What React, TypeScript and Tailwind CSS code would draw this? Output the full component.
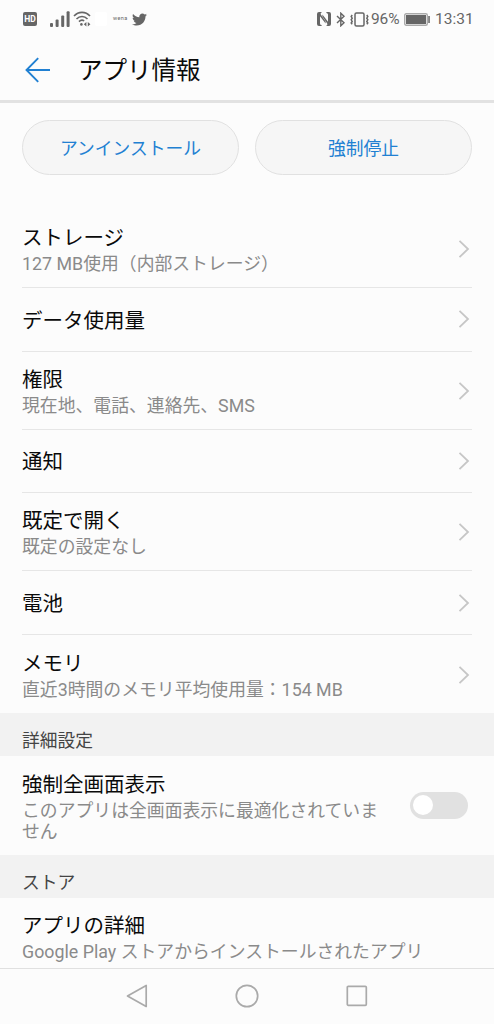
import React from 'react';
import { FaTwitter } from 'react-icons/fa';

interface SettingItem {
  title: string;
  detail?: string;
}

const items: SettingItem[] = [
  { title: 'ストレージ', detail: '127 MB使用（内部ストレージ）' },
  { title: 'データ使用量' },
  { title: '権限', detail: '現在地、電話、連絡先、SMS' },
  { title: '通知' },
  { title: '既定で開く', detail: '既定の設定なし' },
  { title: '電池' },
  { title: 'メモリ', detail: '直近3時間のメモリ平均使用量：154 MB' },
];

const StatusBar: React.FC = () => (
  <div className="flex h-[38px] shrink-0 items-center justify-between pl-[23px] pr-[21px] text-[#666]">
    <div className="flex items-center">
      <span className="flex h-[14px] w-[14px] items-center justify-center rounded-[2px] bg-[#666] text-[8.5px] font-bold leading-none text-white">HD</span>
      <svg className="ml-[13px]" width="20" height="16" viewBox="0 0 20 16" fill="currentColor">
        <rect x="0" y="12" width="3" height="4" rx="1" />
        <rect x="5.6" y="8.5" width="3" height="7.5" rx="1" />
        <rect x="11.2" y="4.5" width="3" height="11.5" rx="1" />
        <rect x="16.6" y="0.3" width="3" height="15.7" rx="1" />
      </svg>
      <svg className="ml-[3px]" width="18" height="16" viewBox="0 0 18 16" fill="none" stroke="currentColor" strokeWidth="1.6">
        <path d="M1 5C5.4 .2 12.6 .2 17 5M3.5 8C6.7 4.7 11.3 4.7 14.5 8M6 10.6C7.5 9 9.8 8.9 11.2 9.8" />
        <circle cx="8.4" cy="13.4" r="1.3" fill="currentColor" stroke="none" />
        <path d="M13.4 11v4.4l-2.6-2.2zM14.8 11v4.4l2.6-2.2z" fill="currentColor" stroke="none" />
      </svg>
      <span className="ml-1 h-[14px] w-3 rounded-[2px] bg-white" />
      <span className="ml-[6px] w-[16px] text-[5.5px] leading-none tracking-[0.4px]">wena</span>
      <FaTwitter className="ml-[3px]" size={15} />
    </div>
    <div className="flex items-center">
      <svg width="14" height="14" viewBox="0 0 14 14" fill="currentColor">
        <path d="M5 0H2Q0 0 0 2v10q0 2 2 2h2.6V13Q3 13 3 11.5V4.2l5.6 7.3V9.4L3.8 2.6Q3 1 5 0z" />
        <path d="M9 14h3q2 0 2-2V2q0-2-2-2H9.4V1Q11 1 11 2.5v7.3L5.4 2.5v2.1l4.8 6.8Q11 13 9 14z" />
      </svg>
      <svg className="ml-[5px]" width="10" height="15" viewBox="0 0 10 15" fill="none" stroke="currentColor" strokeWidth="1.4">
        <path d="M1 4l7 6.8-3.2 3V1.2L8 4.2 1 11" />
      </svg>
      <svg className="ml-1" width="19" height="15" viewBox="0 0 19 15" fill="none" stroke="currentColor" strokeWidth="1.5">
        <rect x="5" y="1" width="9" height="13" rx="1.5" />
        <path d="M2.2 3l-1 1.6 1 1.6-1 1.6 1 1.6-1 1.6 1 1.2M16.8 3l1 1.6-1 1.6 1 1.6-1 1.6 1 1.6-1 1.2" />
      </svg>
      <span className="ml-[2px] w-[29px] pt-[2px] text-[15.5px] leading-none tracking-[-0.1px]">96%</span>
      <svg className="ml-1" width="26" height="13" viewBox="0 0 26 13">
        <rect x=".7" y=".7" width="22.6" height="11.6" rx="1.5" fill="none" stroke="#aaa" strokeWidth="1.4" />
        <rect x="2" y="2" width="20" height="9" fill="currentColor" />
        <rect x="24.3" y="3" width="1.5" height="7" fill="currentColor" />
      </svg>
      <span className="ml-[5px] w-[38px] pt-[2px] text-[15.5px] leading-none">13:31</span>
    </div>
  </div>
);

const Chevron: React.FC = () => (
  <svg className="mr-[2px] shrink-0" width="12" height="18" viewBox="0 0 12 18" fill="none" stroke="#c6c6c6" strokeWidth="1.8">
    <path d="M1.5 .8L10 9l-8.5 8.2" />
  </svg>
);

const Label: React.FC<SettingItem> = ({ title, detail }) => (
  <div className={`flex flex-col ${detail ? '' : 'pt-[3px]'}`}>
    <span className="text-[20.5px] leading-[28px] text-[#0a0a0a]">{title}</span>
    {detail && <span className="pt-px text-[17.83px] leading-[21px] text-[#8a8a8a]">{detail}</span>}
  </div>
);

const SectionHeader: React.FC<{ text: string }> = ({ text }) => (
  <div className="flex h-[43px] shrink-0 items-center bg-[#f2f2f2] px-[22px] pt-[13px] text-[17.75px] leading-[22px] text-[#444]">{text}</div>
);

const App: React.FC = () => {
  return (
    <div className="flex h-[1024px] w-full flex-col overflow-hidden bg-[#fcfcfc] font-[Roboto,'Noto_Sans_CJK_JP',sans-serif]" lang="ja">
      <StatusBar />

      <header className="flex h-[65px] shrink-0 items-center border-b-[3px] border-[#e2e2e2] pl-[25px]">
        <svg className="mt-[2px]" width="26" height="26" viewBox="0 0 26 26" fill="none" stroke="#2180d2" strokeWidth="1.9">
          <path d="M25 13H2M13.2 1.2L1.5 13l11.7 11.8" />
        </svg>
        <h1 className="ml-[27px] pt-1 text-[24.5px] leading-[32px] text-[#0a0a0a]">アプリ情報</h1>
      </header>

      {/* Actions */}
      <div className="flex shrink-0 gap-4 px-[22px] pb-[35px] pt-[17px] text-[17.75px] text-[#2180d2]">
        <button className="h-[55px] flex-1 rounded-full border border-[#e1e1e1] bg-[#f6f6f6] pt-[3px]">アンインストール</button>
        <button className="h-[55px] flex-1 rounded-full border border-[#e1e1e1] bg-[#f6f6f6] pt-[3px]">強制停止</button>
      </div>

      <div className="shrink-0 px-[22px]">
        {items.map((item) => (
          <div
            key={item.title}
            className={`flex items-center justify-between border-b border-[#e6e6e6] last:border-0 ${item.detail ? 'h-[77.9px] pt-px' : 'h-[63.8px]'}`}
          >
            <Label {...item} />
            <Chevron />
          </div>
        ))}
      </div>

      <SectionHeader text="詳細設定" />
      <div className="flex h-[99px] shrink-0 items-center justify-between pl-[22px] pr-[26px]">
        <div className="w-[362px] pt-[2px]">
          <Label title="強制全画面表示" detail="このアプリは全画面表示に最適化されていません" />
        </div>
        <div className="flex h-[27px] w-[58px] items-center rounded-full bg-[#e1e1e1] px-[3px]">
          <div className="h-5 w-5 rounded-full bg-white"></div>
        </div>
      </div>

      <SectionHeader text="ストア" />
      <div className="flex-1 px-[22px] pt-[14px]">
        <Label title="アプリの詳細" detail="Google Play ストアからインストールされたアプリ" />
      </div>

      {/* Navigation bar */}
      <nav className="flex h-[56px] shrink-0 items-center justify-center gap-[86px] border-t border-[#e0e0e0] pb-[2px]">
        <svg width="24" height="24" viewBox="0 0 24 24" fill="none" stroke="#aaa" strokeWidth="1.7" strokeLinejoin="round">
          <path d="M21.2 1.5v21L2.5 12z" />
        </svg>
        <svg width="24" height="24" viewBox="0 0 24 24" fill="none" stroke="#aaa" strokeWidth="1.7">
          <circle cx="12" cy="12" r="10.7" />
        </svg>
        <svg width="24" height="24" viewBox="0 0 24 24" fill="none" stroke="#aaa" strokeWidth="1.7">
          <rect x="2.3" y="2.3" width="19" height="19" rx="1" />
        </svg>
      </nav>
    </div>
  );
};

export default App;
